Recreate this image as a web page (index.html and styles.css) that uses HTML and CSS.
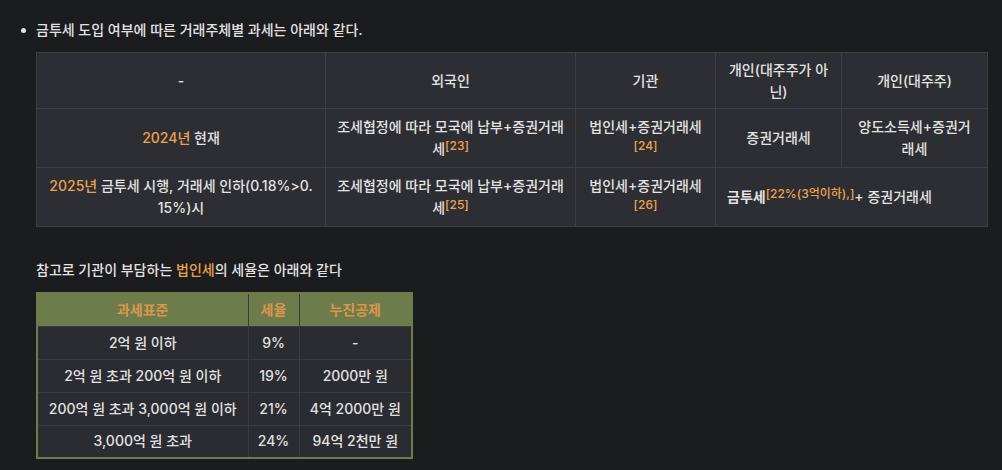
FILE: index.html
```html
<!DOCTYPE html>
<html lang="ko">
<head>
<meta charset="utf-8">
<link rel="stylesheet" href="styles.css">
</head>
<body>
<div class="page">
  <ul class="list">
    <li>
      <div class="item-text">금투세 도입 여부에 따른 거래주체별 과세는 아래와 같다.</div>
      <table class="tax">
        <colgroup>
          <col class="c1"><col class="c2"><col class="c3"><col class="c4"><col class="c5">
        </colgroup>
        <tr class="r-head">
          <td>-</td>
          <td>외국인</td>
          <td>기관</td>
          <td>개인(대주주가 아닌)</td>
          <td>개인(대주주)</td>
        </tr>
        <tr class="r-body">
          <td><span class="hl">2024년</span> 현재</td>
          <td>조세협정에 따라 모국에 납부+증권거래세<sup class="ref">[23]</sup></td>
          <td>법인세+증권거래세<sup class="ref">[24]</sup></td>
          <td>증권거래세</td>
          <td>양도소득세+증권거래세</td>
        </tr>
        <tr class="r-body">
          <td><span class="hl">2025년</span> 금투세 시행, 거래세 인하(0.18%&gt;0.15%)시</td>
          <td>조세협정에 따라 모국에 납부+증권거래세<sup class="ref">[25]</sup></td>
          <td>법인세+증권거래세<sup class="ref">[26]</sup></td>
          <td colspan="2" class="left"><strong>금투세</strong><sup class="ref">[22%(3억이하),]</sup>+ 증권거래세</td>
        </tr>
      </table>
    </li>
  </ul>
  <p class="note">참고로 기관이 부담하는 <span class="hl">법인세</span>의 세율은 아래와 같다</p>
  <table class="rate">
    <colgroup>
      <col class="d1"><col class="d2"><col class="d3">
    </colgroup>
    <tr>
      <th>과세표준</th>
      <th>세율</th>
      <th>누진공제</th>
    </tr>
    <tr><td>2억 원 이하</td><td>9%</td><td>-</td></tr>
    <tr><td>2억 원 초과 200억 원 이하</td><td>19%</td><td>2000만 원</td></tr>
    <tr><td>200억 원 초과 3,000억 원 이하</td><td>21%</td><td>4억 2000만 원</td></tr>
    <tr><td>3,000억 원 초과</td><td>24%</td><td>94억 2천만 원</td></tr>
  </table>
</div>
</body>
</html>
```

FILE: styles.css
```css
html, body {
  margin: 0;
  padding: 0;
  background: #1b1c1e;
}

body {
  color: #e2e2e2;
  font-family: Inter, "Noto Sans CJK KR", sans-serif;
  font-size: 14px;
  font-weight: 500;
  line-height: 22px;
}

.page {
  padding: 19px 0 0 36px;
}

.list {
  margin: 0;
  padding: 0;
  list-style: none;
}

.list li {
  position: relative;
}

.list li::before {
  content: "";
  position: absolute;
  left: -15px;
  top: 9px;
  width: 5px;
  height: 5px;
  border-radius: 50%;
  background: #e2e2e2;
}

.item-text {
  margin-bottom: 11px;
}

table {
  border-collapse: collapse;
  word-break: break-all;
}

.tax {
  width: 951px;
  table-layout: fixed;
  background: #2d2e33;
}

.tax td {
  border: 1px solid #3d3e44;
  padding: 5px 11px;
  text-align: center;
  vertical-align: middle;
}

.tax td.left {
  text-align: left;
}

.c1 { width: 289px; }
.c2 { width: 250px; }
.c3 { width: 140px; }
.c4 { width: 126px; }
.c5 { width: 146px; }

.r-head { height: 56px; }
.r-body { height: 59px; }

.hl {
  color: #eca24c;
}

.ref {
  color: #eca24c;
  font-size: 12px;
  line-height: 12px;
  vertical-align: 4px;
}

strong {
  font-weight: 700;
}

.note {
  margin: 32px 0 11px 0;
}

.rate {
  width: 375px;
  table-layout: fixed;
  border: 2px solid #6e7c4b;
  background: #2b2c31;
}

.d1 { width: 211px; }
.d2 { width: 51px; }
.d3 { width: 113px; }

.rate tr {
  height: 33px;
}

.rate th {
  background: #6e7c4b;
  color: #d9964b;
  font-weight: 700;
  border: 1px solid #3a3b40;
  border-top: 0;
  padding: 0 6px;
  text-align: center;
}

.rate td {
  border: 1px solid #3a3b40;
  padding: 0 6px;
  text-align: center;
  vertical-align: middle;
}
```
